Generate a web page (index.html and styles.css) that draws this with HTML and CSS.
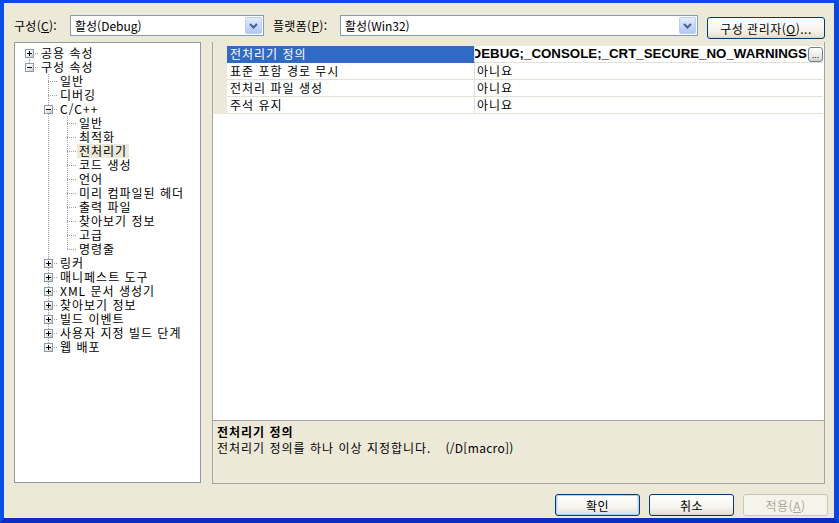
FILE: index.html
```html
<!DOCTYPE html>
<html lang="ko">
<head>
<meta charset="utf-8">
<title>속성 페이지</title>
<link rel="stylesheet" href="styles.css">
</head>
<body>
<div class="window">
  <div class="toolbar">
    <span class="label label-config">구성(<u>C</u>):</span>
    <div class="combo combo-config">
      <span class="combo-text">활성(Debug)</span>
      <span class="combo-btn"><svg width="9" height="6" viewBox="0 0 9 6"><path d="M1 1L4.5 4.5L8 1" stroke="#4d6185" stroke-width="2" fill="none"/></svg></span>
    </div>
    <span class="label label-platform">플랫폼(<u>P</u>):</span>
    <div class="combo combo-platform">
      <span class="combo-text">활성(Win32)</span>
      <span class="combo-btn"><svg width="9" height="6" viewBox="0 0 9 6"><path d="M1 1L4.5 4.5L8 1" stroke="#4d6185" stroke-width="2" fill="none"/></svg></span>
    </div>
    <button class="btn btn-manager">구성 관리자(<u>O</u>)...</button>
  </div>

  <div class="main">
    <div class="tree">
      <div class="node"><span class="g g-first"><span class="box plus"></span></span><span class="t">공용 속성</span></div>
      <div class="node"><span class="g g-ell"><span class="box minus"></span></span><span class="t">구성 속성</span></div>
      <div class="node"><span class="g"></span><span class="g g-tee"></span><span class="t">일반</span></div>
      <div class="node"><span class="g"></span><span class="g g-tee"></span><span class="t">디버깅</span></div>
      <div class="node"><span class="g"></span><span class="g g-tee"><span class="box minus"></span></span><span class="t">C/C++</span></div>
      <div class="node"><span class="g"></span><span class="g g-pipe"></span><span class="g g-tee"></span><span class="t">일반</span></div>
      <div class="node"><span class="g"></span><span class="g g-pipe"></span><span class="g g-tee"></span><span class="t">최적화</span></div>
      <div class="node"><span class="g"></span><span class="g g-pipe"></span><span class="g g-tee"></span><span class="t t-selected">전처리기</span></div>
      <div class="node"><span class="g"></span><span class="g g-pipe"></span><span class="g g-tee"></span><span class="t">코드 생성</span></div>
      <div class="node"><span class="g"></span><span class="g g-pipe"></span><span class="g g-tee"></span><span class="t">언어</span></div>
      <div class="node"><span class="g"></span><span class="g g-pipe"></span><span class="g g-tee"></span><span class="t">미리 컴파일된 헤더</span></div>
      <div class="node"><span class="g"></span><span class="g g-pipe"></span><span class="g g-tee"></span><span class="t">출력 파일</span></div>
      <div class="node"><span class="g"></span><span class="g g-pipe"></span><span class="g g-tee"></span><span class="t">찾아보기 정보</span></div>
      <div class="node"><span class="g"></span><span class="g g-pipe"></span><span class="g g-tee"></span><span class="t">고급</span></div>
      <div class="node"><span class="g"></span><span class="g g-pipe"></span><span class="g g-ell"></span><span class="t">명령줄</span></div>
      <div class="node"><span class="g"></span><span class="g g-tee"><span class="box plus"></span></span><span class="t">링커</span></div>
      <div class="node"><span class="g"></span><span class="g g-tee"><span class="box plus"></span></span><span class="t">매니페스트 도구</span></div>
      <div class="node"><span class="g"></span><span class="g g-tee"><span class="box plus"></span></span><span class="t">XML 문서 생성기</span></div>
      <div class="node"><span class="g"></span><span class="g g-tee"><span class="box plus"></span></span><span class="t">찾아보기 정보</span></div>
      <div class="node"><span class="g"></span><span class="g g-tee"><span class="box plus"></span></span><span class="t">빌드 이벤트</span></div>
      <div class="node"><span class="g"></span><span class="g g-tee"><span class="box plus"></span></span><span class="t">사용자 지정 빌드 단계</span></div>
      <div class="node"><span class="g"></span><span class="g g-ell"><span class="box plus"></span></span><span class="t">웹 배포</span></div>
    </div>

    <div class="props">
      <div class="grid">
        <div class="row row-selected">
          <div class="gutter"></div>
          <div class="name">전처리기 정의</div>
          <div class="value value-edit"><span class="value-text">WIN32;_DEBUG;_CONSOLE;_CRT_SECURE_NO_WARNINGS</span><span class="ellipsis">...</span></div>
        </div>
        <div class="row">
          <div class="gutter"></div>
          <div class="name">표준 포함 경로 무시</div>
          <div class="value">아니요</div>
        </div>
        <div class="row">
          <div class="gutter"></div>
          <div class="name">전처리 파일 생성</div>
          <div class="value">아니요</div>
        </div>
        <div class="row">
          <div class="gutter"></div>
          <div class="name">주석 유지</div>
          <div class="value">아니요</div>
        </div>
      </div>
      <div class="desc">
        <div class="desc-title">전처리기 정의</div>
        <div class="desc-text">전처리기 정의를 하나 이상 지정합니다.<span class="desc-switch">(/D[macro])</span></div>
      </div>
    </div>
  </div>

  <div class="buttons">
    <button class="btn btn-default">확인</button>
    <button class="btn">취소</button>
    <button class="btn" disabled>적용(<u>A</u>)</button>
  </div>
</div>
</body>
</html>
```
FILE: styles.css
```css
* { box-sizing: border-box; }
html, body { margin: 0; padding: 0; }
body {
  width: 839px;
  height: 523px;
  overflow: hidden;
  background: #ECE9D8;
  font-family: "Noto Sans CJK KR", "Noto Sans", sans-serif;
  font-size: 12px;
  letter-spacing: 1px;
  color: #000;
}
u { text-decoration: underline; text-underline-offset: 1px; }

.window {
  width: 839px;
  height: 523px;
  border-style: solid;
  border-width: 3px 5px 5px 4px;
  border-color: #0A4BE4 #0848DC #0A2FC0 #0A4FE6;
  background: #ECE9D8;
  display: flex;
  flex-direction: column;
}

/* top bar */
.toolbar {
  display: flex;
  align-items: flex-start;
  height: 24px;
  margin-top: 12px;
  padding-left: 10px;
}
.label { line-height: 21px; white-space: nowrap; letter-spacing: 0.3px; }
.label-config { width: 56px; }
.label-platform { width: 67px; margin-left: 9px; }

.combo {
  height: 21px;
  border: 1px solid #7F9DB9;
  background: #fff;
  display: flex;
  align-items: center;
  justify-content: space-between;
}
.combo-config { width: 194px; }
.combo-platform { width: 358px; }
.combo-text { padding-left: 4px; line-height: 19px; letter-spacing: 0; }
.combo-btn {
  width: 17px;
  height: 17px;
  margin-right: 1px;
  border: 1px solid #BCCDF2;
  border-radius: 2px;
  background: linear-gradient(#E4EDFD, #C3D5FB 60%, #B2C8F6);
  display: flex;
  align-items: center;
  justify-content: center;
}

.btn {
  font-family: inherit;
  font-size: 12px;
  letter-spacing: 0.5px;
  color: #000;
  height: 22px;
  padding: 0;
  border: 1px solid #003C74;
  border-radius: 3px;
  background: linear-gradient(#FFFFFF, #F5F4EF 60%, #E6E3D9 90%, #D8D3C6);
  display: flex;
  align-items: center;
  justify-content: center;
}
.btn-manager { width: 118px; margin-left: 9px; margin-top: 2px; }

/* main area */
.main {
  display: flex;
  margin-top: 3px;
  padding-left: 10px;
  height: 442px;
}

.tree {
  width: 187px;
  height: 441px;
  border: 1px solid #8F9AA6;
  background: #fff;
  padding: 3px 0 0 5px;
}
.node {
  display: flex;
  height: 14px;
  white-space: nowrap;
}
.g {
  flex: none;
  width: 19px;
  height: 14px;
}
.g-pipe {
  background: repeating-linear-gradient(to bottom, #A0A0A0 0 1px, transparent 1px 2px) 9px 0 / 1px 14px no-repeat;
}
.g-tee {
  background:
    repeating-linear-gradient(to bottom, #A0A0A0 0 1px, transparent 1px 2px) 9px 0 / 1px 14px no-repeat,
    repeating-linear-gradient(to right, #A0A0A0 0 1px, transparent 1px 2px) 9px 7px / 10px 1px no-repeat;
}
.g-ell {
  background:
    repeating-linear-gradient(to bottom, #A0A0A0 0 1px, transparent 1px 2px) 9px 0 / 1px 7px no-repeat,
    repeating-linear-gradient(to right, #A0A0A0 0 1px, transparent 1px 2px) 9px 7px / 10px 1px no-repeat;
}
.g-first {
  background:
    repeating-linear-gradient(to bottom, #A0A0A0 0 1px, transparent 1px 2px) 9px 7px / 1px 7px no-repeat,
    repeating-linear-gradient(to right, #A0A0A0 0 1px, transparent 1px 2px) 9px 7px / 10px 1px no-repeat;
}
.box {
  display: block;
  width: 9px;
  height: 9px;
  margin: 3px 0 0 5px;
  border: 1px solid #8A9BAD;
}
.box.plus {
  background:
    linear-gradient(#000, #000) 1px 3px / 5px 1px no-repeat,
    linear-gradient(#000, #000) 3px 1px / 1px 5px no-repeat,
    linear-gradient(135deg, #FFFFFF 35%, #C9C6B8);
}
.box.minus {
  background:
    linear-gradient(#000, #000) 1px 3px / 5px 1px no-repeat,
    linear-gradient(135deg, #FFFFFF 35%, #C9C6B8);
}
.t {
  line-height: 14px;
  padding: 0 2px 0 2px;
}
.t-selected { background: #ECE9D8; }

/* property grid */
.props {
  width: 613px;
  height: 442px;
  margin-left: 11px;
  border: 1px solid #A5A5A5;
  border-top: none;
  display: flex;
  flex-direction: column;
}
.grid {
  margin-top: 4px;
  height: 374px;
  background: #fff;
}
.row {
  display: flex;
  height: 17px;
}
.gutter {
  width: 14px;
  flex: none;
  background: #ECE9D8;
}
.name {
  width: 248px;
  flex: none;
  padding-left: 3px;
  line-height: 16px;
  border-right: 1px solid #E3E0D5;
  border-bottom: 1px solid #E3E0D5;
  white-space: nowrap;
}
.value {
  flex: 1;
  padding-left: 2px;
  line-height: 16px;
  border-bottom: 1px solid #E3E0D5;
  margin-right: 1px;
  white-space: nowrap;
}
.row-selected .name { background: #316AC5; color: #fff; border-bottom-color: #316AC5; }
.value-edit {
  display: flex;
  justify-content: flex-end;
  align-items: center;
  overflow: hidden;
  padding-left: 1px;
}
.value-text {
  flex: none;
  font-family: "Liberation Sans", "Noto Sans CJK KR", sans-serif;
  font-weight: bold;
  font-size: 13.3px;
  letter-spacing: 0;
  line-height: 16px;
  margin-right: 1px;
}
.ellipsis {
  flex: none;
  width: 15px;
  height: 15px;
  border: 1px solid #6F7F94;
  border-radius: 3px;
  background: linear-gradient(#FFFFFF, #E8E8E2 70%, #D0D0C8);
  font-family: "Liberation Sans", sans-serif;
  font-size: 9px;
  letter-spacing: 0;
  line-height: 14px;
  text-align: center;
  color: #000;
  overflow: hidden;
}

.desc {
  flex: 1;
  border-top: 1px solid #A5A5A5;
  padding: 3px 4px;
  line-height: 16px;
}
.desc-title { font-weight: bold; }
.desc-switch { margin-left: 14px; letter-spacing: 0.3px; }

/* bottom buttons */
.buttons {
  display: flex;
  justify-content: flex-end;
  gap: 9px;
  margin-top: 10px;
  padding-right: 6px;
}
.buttons .btn { width: 85px; }
.btn-default {
  box-shadow: inset 0 0 0 1px #B7CDF5, inset 0 -1px 0 2px #D6E3FA;
}
.btn:disabled {
  border-color: #C9C7BA;
  background: #F5F4EA;
  color: #ACA899;
}
```
